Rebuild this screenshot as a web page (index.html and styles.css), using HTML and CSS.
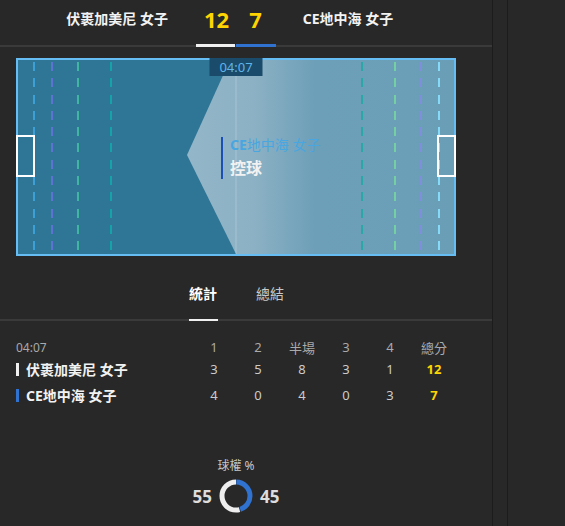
FILE: index.html
```html
<!DOCTYPE html>
<html lang="zh-Hant">
<head>
  <meta charset="UTF-8">
  <meta name="viewport" content="width=device-width, initial-scale=1.0">
  <title>比賽</title>
  <link rel="stylesheet" href="styles.css">
</head>
<body>
  <div class="app">
    <div class="main">
      <div class="header">
        <span class="team home">伏裹加美尼 女子</span>
        <div class="scores"><span>12</span><span>7</span></div>
        <span class="team away">CE地中海 女子</span>
      </div>
      <div class="header-rule">
        <div class="score-bar"><span class="bar-home"></span><span class="bar-away"></span></div>
      </div>

      <!-- 場地 -->
      <div class="pitch">
        <div class="overlay"></div>
        <div class="midline"></div>
        <span class="dash" style="left:15px;background-color:#3c9fd6"></span>
        <span class="dash" style="left:33px;background-color:#5d72d2"></span>
        <span class="dash" style="left:59px;background-color:#40b5a0"></span>
        <span class="dash" style="left:92px;background-color:#14a3a6"></span>
        <span class="dash" style="left:343px;background-color:#2aa7a7"></span>
        <span class="dash" style="left:376px;background-color:#74d0a2"></span>
        <span class="dash" style="left:402px;background-color:#7f8fdc"></span>
        <span class="dash" style="left:420px;background-color:#86daf8"></span>
        <div class="goal goal-left"></div>
        <div class="goal goal-right"></div>
        <div class="timer">04:07</div>
        <div class="ball-label">
          <span class="ball-team"><b>CE</b>地中海 女子</span>
          <span class="ball-text">控球</span>
        </div>
      </div>

      <div class="tabs">
        <span class="tab active">統計</span>
        <span class="tab">總結</span>
      </div>
      <div class="tab-rule"><div class="tab-bar"></div></div>

      <div class="board">
        <div class="row head">
          <span class="time">04:07</span>
          <span>1</span><span>2</span><span>半場</span><span>3</span><span>4</span><span>總分</span>
        </div>
        <div class="row">
          <span class="name"><i class="mark mark-home"></i>伏裹加美尼 女子</span>
          <span>3</span><span>5</span><span>8</span><span>3</span><span>1</span><span class="total">12</span>
        </div>
        <div class="row away-row">
          <span class="name"><i class="mark mark-away"></i>CE地中海 女子</span>
          <span>4</span><span>0</span><span>4</span><span>0</span><span>3</span><span class="total">7</span>
        </div>
      </div>

      <div class="possession">
        <p class="poss-title">球權 %</p>
        <div class="poss-row">
          <span class="poss-num">55</span>
          <svg class="donut" width="34" height="34" viewBox="0 0 34 34">
            <circle cx="17" cy="17" r="14" fill="none" stroke="#eeeeee" stroke-width="5"
                    stroke-dasharray="47.6 40.36" stroke-dashoffset="-40.1" transform="rotate(-90 17 17)" />
            <circle cx="17" cy="17" r="14" fill="none" stroke="#2f72d0" stroke-width="5"
                    stroke-dasharray="39.1 48.86" stroke-dashoffset="-0.3" transform="rotate(-90 17 17)" />
          </svg>
          <span class="poss-num">45</span>
        </div>
      </div>
    </div>
    <div class="gutter"></div>
    <div class="side"></div>
  </div>
</body>
</html>
```

FILE: styles.css
```css
body {
  font-family: "Noto Sans", "Noto Sans CJK TC", sans-serif;
  margin: 0;
  padding: 0;
  background-color: #282828;
  color: #eeeeee;
}
.app {
  display: flex;
  height: 100vh;
}
.main {
  width: 492px;
  flex-shrink: 0;
}
.gutter {
  width: 14px;
  border-left: 1px solid #1c1c1c;
  border-right: 1px solid #1c1c1c;
}
.side {
  flex: 1;
}

/* 標題列 */
.header {
  height: 44px;
  padding-bottom: 6px;
  box-sizing: border-box;
  display: flex;
  align-items: center;
}
.team {
  font-size: 14px;
  font-weight: bold;
  color: #f2f2f2;
  line-height: 18px;
  white-space: nowrap;
}
.team.home {
  width: 168px;
  text-align: right;
}
.team.away {
  margin-left: 41px;
}
.scores {
  display: flex;
  gap: 20px;
  margin-left: 36px;
  font-size: 22px;
  font-weight: bold;
  color: #ffd400;
  line-height: 26px;
}
.header-rule {
  height: 3px;
  background: linear-gradient(to bottom, transparent 1px, #3a3a3a 1px);
}
.score-bar {
  display: flex;
  margin-left: 196px;
  width: 80px;
  height: 3px;
}
.bar-home {
  width: 39px;
  background-color: #f0f0f0;
}
.bar-away {
  width: 40px;
  margin-left: 1px;
  background-color: #2f72d0;
}

/* 場地 */
.pitch {
  position: relative;
  margin: 11px 0 0 16px;
  width: 440px;
  height: 198px;
  box-sizing: border-box;
  border: 2px solid #66bdf3;
  background-color: #2e7596;
}
.overlay {
  position: absolute;
  left: 169px;
  top: 0;
  right: 0;
  bottom: 0;
  background: linear-gradient(to right, #93b6c8 0%, #8cb1c4 25%, #6d9fb8 48%, #6a9eb7 100%);
  clip-path: polygon(43px 0, 0 95px, 49px 100%, 100% 100%, 100% 0);
}
.midline {
  position: absolute;
  left: 217px;
  top: 0;
  bottom: 0;
  width: 2px;
  background-color: rgba(255, 255, 255, 0.12);
}
.dash {
  position: absolute;
  top: 2px;
  bottom: 0;
  width: 2px;
  -webkit-mask: repeating-linear-gradient(to bottom, #000 0 9px, transparent 9px 16.3px);
  mask: repeating-linear-gradient(to bottom, #000 0 9px, transparent 9px 16.3px);
}
.goal {
  position: absolute;
  top: 75px;
  width: 19px;
  height: 42px;
  box-sizing: border-box;
  border: 2px solid #ffffff;
}
.goal-left {
  left: -2px;
}
.goal-right {
  right: -2px;
}
.timer {
  position: absolute;
  top: -2px;
  left: 50%;
  transform: translateX(-50%);
  width: 53px;
  height: 18px;
  background-color: #1b4b6b;
  color: #5db5ea;
  font-size: 13px;
  line-height: 18px;
  text-align: center;
}
.ball-label {
  position: absolute;
  left: 203px;
  top: 77px;
  display: flex;
  flex-direction: column;
  border-left: 2px solid #1c4fb3;
  padding-left: 7px;
}
.ball-team {
  font-size: 14px;
  line-height: 16px;
  color: #48a6e0;
  white-space: nowrap;
}
.ball-text {
  margin-top: 4px;
  font-size: 16px;
  font-weight: bold;
  line-height: 22px;
  color: #f2f2f2;
}

/* 分頁 */
.tabs {
  display: flex;
  gap: 39px;
  padding: 30px 0 17px 189px;
}
.tab {
  font-size: 14px;
  line-height: 16px;
  color: #c8c8c8;
}
.tab.active {
  font-weight: bold;
  color: #ffffff;
}
.tab-rule {
  height: 2px;
  background-color: #3a3a3a;
}
.tab-bar {
  margin-left: 189px;
  width: 29px;
  height: 2px;
  background-color: #f0f0f0;
}

/* 比分表 */
.board {
  margin-top: 15px;
  padding-left: 16px;
}
.row {
  display: grid;
  grid-template-columns: 176px repeat(6, 44px);
  align-items: center;
  height: 22px;
  font-size: 13px;
  color: #cccccc;
  text-align: center;
}
.row.head {
  color: #aaaaaa;
}
.away-row {
  margin-top: 4px;
}
.time {
  text-align: left;
  font-size: 12px;
}
.name {
  display: flex;
  align-items: center;
  text-align: left;
  font-size: 14px;
  font-weight: bold;
  color: #f2f2f2;
  white-space: nowrap;
}
.mark {
  width: 3px;
  height: 13px;
  margin-right: 7px;
}
.mark-home {
  background-color: #f0f0f0;
}
.mark-away {
  background-color: #2f72d0;
}
.total {
  font-weight: bold;
  color: #ffd400;
}

/* 球權 */
.possession {
  margin-top: 52px;
  width: 472px;
  display: flex;
  flex-direction: column;
  align-items: center;
}
.poss-title {
  margin: 0;
  font-size: 12px;
  line-height: 16px;
  color: #c8c8c8;
}
.poss-row {
  display: flex;
  align-items: center;
  gap: 7px;
  margin-top: 5px;
}
.poss-num {
  font-size: 17px;
  font-weight: bold;
  color: #dddddd;
}
.donut {
  display: block;
}
```
